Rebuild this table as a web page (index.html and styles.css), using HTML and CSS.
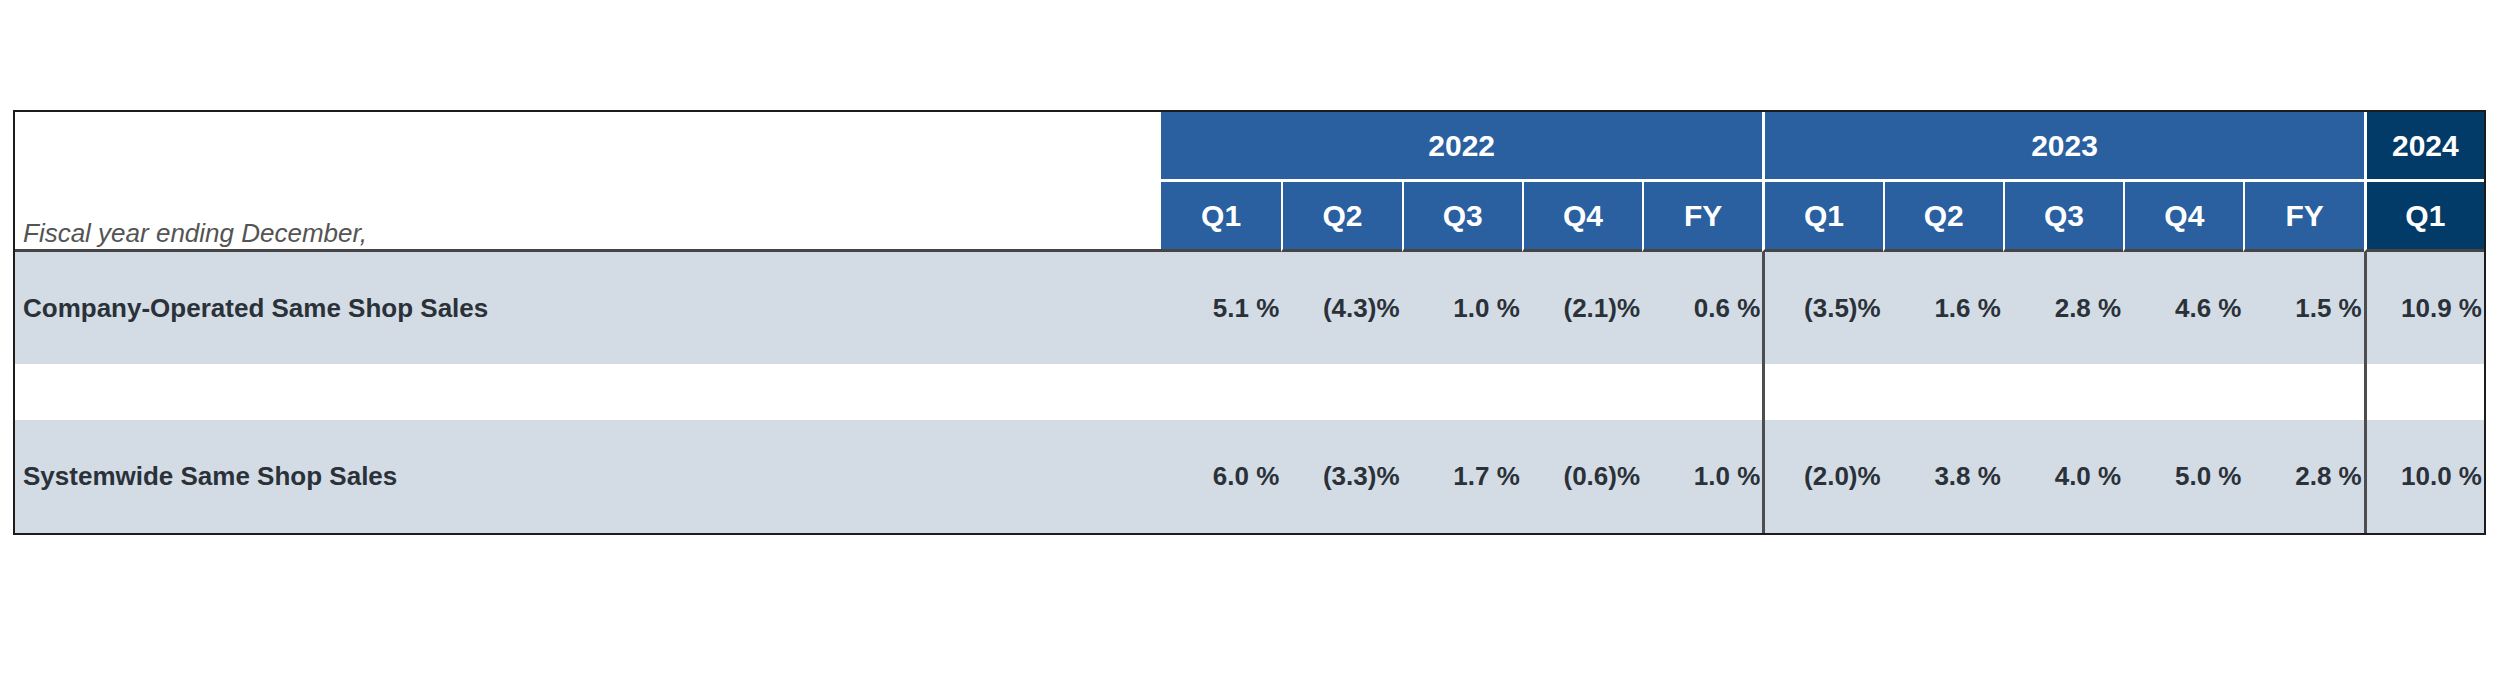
FILE: index.html
```html
<!DOCTYPE html>
<html lang="en">
<head>
<meta charset="utf-8">
<title>Same Shop Sales</title>
<link rel="stylesheet" href="styles.css">
</head>
<body>
<div class="page">
  <div class="tbl">
    <div class="corner"><span class="fiscal">Fiscal year ending December,</span></div>
    <div class="yr span5">2022</div>
    <div class="yr span5 wsep">2023</div>
    <div class="yr dark wsep">2024</div>

    <div class="q">Q1</div>
    <div class="q qsep">Q2</div>
    <div class="q qsep">Q3</div>
    <div class="q qsep">Q4</div>
    <div class="q qsep">FY</div>
    <div class="q wsep">Q1</div>
    <div class="q qsep">Q2</div>
    <div class="q qsep">Q3</div>
    <div class="q qsep">Q4</div>
    <div class="q qsep">FY</div>
    <div class="q dark wsep">Q1</div>

    <div class="lbl">Company-Operated Same Shop Sales</div>
    <div class="num">5.1 %</div>
    <div class="num">(4.3)%</div>
    <div class="num">1.0 %</div>
    <div class="num">(2.1)%</div>
    <div class="num">0.6 %</div>
    <div class="num bsep">(3.5)%</div>
    <div class="num">1.6 %</div>
    <div class="num">2.8 %</div>
    <div class="num">4.6 %</div>
    <div class="num">1.5 %</div>
    <div class="num bsep">10.9 %</div>

    <div class="gap"></div>
    <div class="gap"></div>
    <div class="gap"></div>
    <div class="gap"></div>
    <div class="gap"></div>
    <div class="gap"></div>
    <div class="gap bsep"></div>
    <div class="gap"></div>
    <div class="gap"></div>
    <div class="gap"></div>
    <div class="gap"></div>
    <div class="gap bsep"></div>

    <div class="lbl">Systemwide Same Shop Sales</div>
    <div class="num">6.0 %</div>
    <div class="num">(3.3)%</div>
    <div class="num">1.7 %</div>
    <div class="num">(0.6)%</div>
    <div class="num">1.0 %</div>
    <div class="num bsep">(2.0)%</div>
    <div class="num">3.8 %</div>
    <div class="num">4.0 %</div>
    <div class="num">5.0 %</div>
    <div class="num">2.8 %</div>
    <div class="num bsep">10.0 %</div>
  </div>
</div>
</body>
</html>
```

FILE: styles.css
```css
* {
  box-sizing: border-box;
}

html, body {
  margin: 0;
  padding: 0;
  background: #ffffff;
}

body {
  font-family: "Liberation Sans", Arial, sans-serif;
}

.page {
  padding: 110px 0 0 13px;
}

.tbl {
  width: 2473px;
  border: 2px solid #1c1c1c;
  display: grid;
  grid-template-columns: 1146px repeat(11, 1fr);
  grid-template-rows: 70px 70px 112px 56px 113px;
}

.corner {
  grid-row: span 2;
  background: #ffffff;
  border-bottom: 3px solid #454545;
  display: flex;
  align-items: flex-end;
  padding: 0 0 3px 8px;
}

.fiscal {
  font-style: italic;
  font-size: 26px;
  line-height: 1;
  color: #545454;
}

.yr,
.q {
  background: #2a609f;
  color: #ffffff;
  font-weight: bold;
  font-size: 30px;
  display: flex;
  align-items: center;
  justify-content: center;
}

.yr {
  border-bottom: 3px solid #ffffff;
}

.q {
  border-bottom: 3px solid #454545;
}

.span5 {
  grid-column: span 5;
}

.dark {
  background: #033b68;
}

.qsep {
  border-left: 2px solid #ffffff;
}

.wsep {
  border-left: 3px solid #ffffff;
}

.lbl,
.num {
  background: #d3dce5;
  color: #2b3139;
  font-weight: bold;
  font-size: 26px;
  display: flex;
  align-items: center;
}

.lbl {
  padding-left: 8px;
}

.num {
  justify-content: flex-end;
  padding-right: 2px;
  white-space: pre;
}

.gap {
  background: #ffffff;
}

.bsep {
  border-left: 3px solid #4d4d4d;
}
```
